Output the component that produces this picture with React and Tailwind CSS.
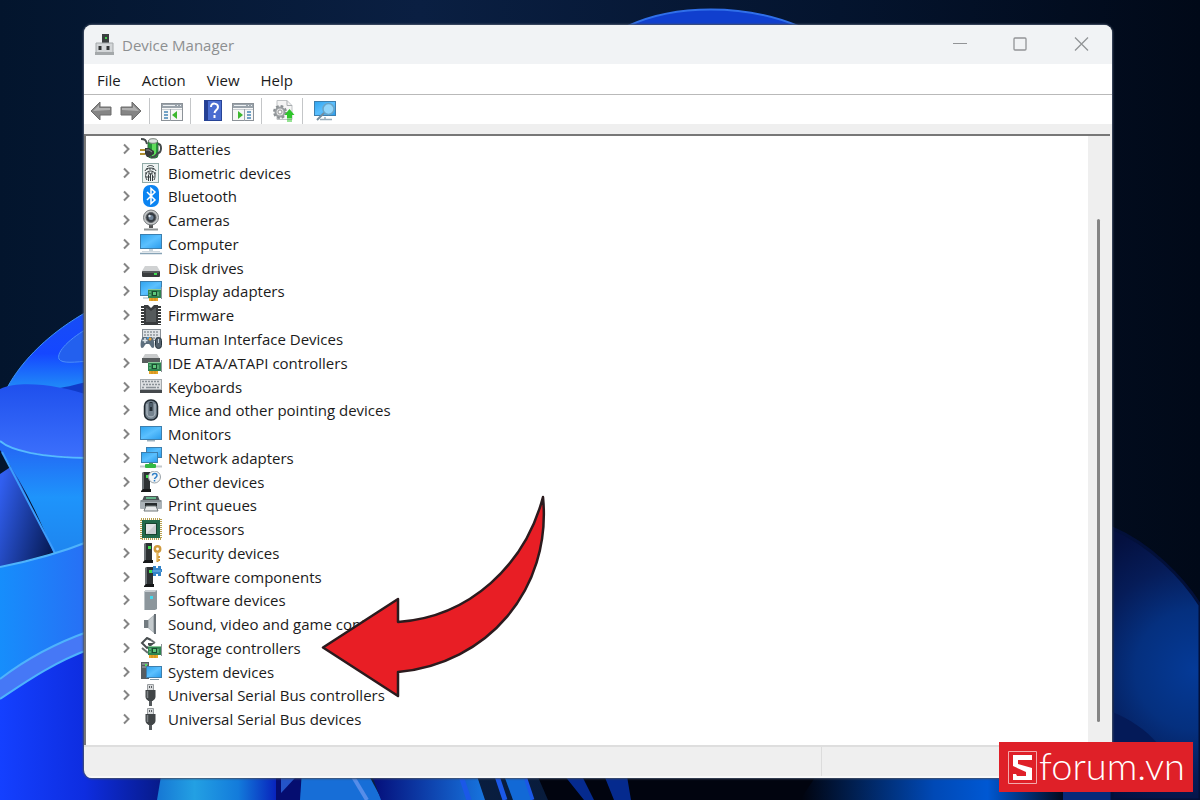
import React from 'react';

const menuItems = ["File", "Action", "View", "Help"];

// shared parts of the device icons, all drawn on a 22x22 grid
const Screen = ({ x, y, w, h }) => (
    <>
        <rect x={x} y={y} width={w} height={h} fill="#3d7fae" />
        <rect x={x + 1} y={y + 1} width={w - 2} height={h - 2} fill="url(#screen)" />
    </>
);

const Card = ({ x, y }) => (
    <>
        <rect x={x + 1} y={y + 8} width="9" height="4" fill="#e8a628" />
        <path d={`M${x + 4} ${y + 8}v4M${x + 7} ${y + 8}v4`} stroke="#c98a1c" />
        <rect x={x} y={y} width="13" height="9" fill="#2f8450" />
        <rect x={x} y={y} width="13" height="1" fill="#8cc79a" />
        <rect x={x + 4} y={y + 2} width="5" height="5" fill="#1b4b30" />
        <rect x={x + 5} y={y + 3} width="3" height="3" fill="#5fc97c" />
        <path d={`M${x + 1} ${y + 3}h2M${x + 1} ${y + 6}h2M${x + 10} ${y + 3}v4`} stroke="#80d094" />
        <path d={`M${x + 13.5} ${y - 2}v12`} stroke="#8c9499" />
    </>
);

const Tower = ({ x }) => (
    <>
        <path d={`M${x} 2l2-1h6v17h-7l-1 1z`} fill="#2d3133" />
        <path d={`M${x} 2l2-1v17l-2 1z`} fill="#6b7175" />
        <rect x={x + 4} y="4" width="3" height="3" fill="#42e04f" />
        <path d={`M${x - 1} 20l2-2h8v3h-10z`} fill="#161819" />
    </>
);

const icons = {
    battery: (
        <>
            <rect x="8" y="2" width="10" height="18" rx="3" fill="#249638" stroke="#346941" />
            <path d="M12 4h4v14h-4z" fill="#5fdc5c" />
            <ellipse cx="13" cy="3" rx="4.500" ry="2.300" fill="#dce3e0" stroke="#788079" />
            <path d="M1 1c4 0 5 1 6 5M18 6c4 0 4 8 0 9-2 2-3 5-7 4" fill="none" stroke="#444a4b" strokeWidth="2" />
            <path d="M0 12h5M0 16h5" stroke="#b09031" strokeWidth="2" />
            <path d="M5 10h4l5 3v3l-5 3H7l-2-3z" fill="#373b3c" />
            <path d="M6 12h3l3 2" stroke="#8c9192" fill="none" />
        </>
    ),
    fingerprint: (
        <>
            <rect x="2.500" y="1.500" width="16" height="19" fill="#edf3f2" stroke="#91aaa7" />
            <g fill="none" stroke="#343a3d">
                <path d="M7 5c2-2 5-2 7 0M5 9c1-4 10-4 11 0M7 18c-1-2-2-4-1-6 1-4 8-4 9 0 0 3 0 4-1 6M8.500 19v-6c1-2 3-2 4 0v6M10.500 12v7" />
                <path d="M6 7h9M5 11h11M6 15h9" strokeDasharray="2 1" />
            </g>
        </>
    ),
    bluetooth: (
        <>
            <rect x="3" y="0" width="16" height="22" rx="7" fill="#0b84f2" />
            <path d="M7 7l8 8-4 3.500V3.500L15 7l-8 8" fill="none" stroke="#fff" strokeWidth="1.500" />
        </>
    ),
    camera: (
        <>
            <path d="M9 15h4v4H9z" fill="#555" />
            <path d="M4 20.500h14" stroke="#919596" strokeWidth="2" />
            <circle cx="11" cy="8.500" r="7.500" fill="#c4c7c8" stroke="#777b7e" />
            <circle cx="11" cy="8.500" r="5" fill="#353b42" stroke="#606468" />
            <circle cx="11" cy="8.500" r="2.500" fill="#6f8296" />
            <circle cx="9.500" cy="7" r="1.200" fill="#dde7ef" />
        </>
    ),
    computer: (
        <>
            <Screen x={0} y={1} w={22} h={15} />
            <path d="M9 16h4v2H9z" fill="#c8d5dd" />
            <path d="M2 18.500h18" stroke="#d0d9df" />
            <path d="M0 20.500h22" stroke="#87a3b6" strokeWidth="1.500" />
        </>
    ),
    disk: (
        <>
            <path d="M5 9h12l3 5H2z" fill="#d0d2d3" />
            <rect x="2" y="14" width="18" height="6" rx="1" fill="#3a3d3e" />
            <path d="M3 15h16" stroke="#797d7f" />
            <rect x="14" y="16" width="3" height="2" fill="#42e052" />
        </>
    ),
    display: (
        <>
            <Screen x={0} y={1} w={22} h={15} />
            <path d="M3 18h6" stroke="#9bb2c0" />
            <Card x={8} y={9} />
        </>
    ),
    firmware: (
        <>
            <path d="M2.500 2v19M19.500 2v19" stroke="#373a3b" strokeWidth="3" strokeDasharray="2 1" />
            <path d="M4 1h4l3 3 3-3h4v20H4z" fill="#393c3e" />
            <path d="M6 4h1l4 3 4-3h1v14H6z" fill="#555a5c" />
        </>
    ),
    hid: (
        <>
            <rect x="2.500" y="1.500" width="18" height="11" fill="#e0e4e7" stroke="#878f96" />
            <path d="M4 4h15M4 7h15M4 10h15" stroke="#8d959c" strokeWidth="1.500" strokeDasharray="2 1" />
            <path d="M3 9h9c3 4 3 11 1 11s-3-4-4-4H6c-1 0-2 4-4 4s-2-8 1-11z" fill="#5d6f7e" />
            <path d="M5 10v5M2.500 12.500h5" stroke="#dfe7ec" strokeWidth="1.500" />
            <circle cx="10" cy="11" r="1.500" fill="#eea233" />
            <circle cx="8" cy="10" r="1" fill="#4ca8ee" />
            <rect x="15.500" y="9.500" width="6" height="11" rx="3" fill="#53616d" stroke="#26333b" />
            <path d="M18.500 11v4" stroke="#c5d0d7" />
        </>
    ),
    ide: (
        <>
            <path d="M5 2h12l3 5H2z" fill="#c9cbcc" />
            <rect x="2" y="6" width="18" height="5" fill="#595d5e" />
            <Card x={8} y={10} />
        </>
    ),
    keyboard: (
        <>
            <rect x="0" y="3" width="22" height="13" fill="#a5aaae" />
            <rect x="1" y="4" width="20" height="9" fill="#dde0e2" />
            <path d="M2 5.500h18M3 8.500h17M2 11.500h3M17 11.500h3" stroke="#8a9197" strokeWidth="1.500" strokeDasharray="2 1" />
            <path d="M6 11.500h10" stroke="#8a9197" strokeWidth="1.500" />
            <rect x="0" y="14" width="22" height="3" fill="#45494c" />
        </>
    ),
    mouse: (
        <>
            <rect x="4.500" y="1" width="13" height="20" rx="6" fill="#75838f" stroke="#222b33" strokeWidth="1.500" />
            <path d="M7 5v10c1 4 7 4 8 0V5" fill="none" stroke="#b9c3cb" />
            <path d="M11 3v9" stroke="#242d35" strokeWidth="3" />
            <path d="M11 4v4" stroke="#7890a3" />
        </>
    ),
    monitor: (
        <>
            <Screen x={0} y={3} w={22} h={14} />
            <path d="M7 17h8v1.500H7z" fill="#9eb2c0" />
        </>
    ),
    network: (
        <>
            <Screen x={6} y={0} w={16} h={11} />
            <Screen x={1} y={5} w={17} h={11} />
            <path d="M9 16h4v3H9z" fill="#46aa4f" />
            <path d="M0 19.500h22" stroke="#c3c9cc" strokeWidth="2" />
            <rect x="5" y="17" width="11" height="4" rx="1" fill="#33b843" />
        </>
    ),
    other: (
        <>
            <Tower x={2} />
            <circle cx="14.500" cy="6" r="6" fill="#f4f6f7" stroke="#9aa3a8" />
            <path d="M12.500 4.500c0-3 4.500-2.500 4.500 0 0 2-2 1.500-2.500 3.500M14.500 9v1.500" fill="none" stroke="#2e7fc8" strokeWidth="1.500" />
        </>
    ),
    printer: (
        <>
            <path d="M4 2h14l2 5H2z" fill="#4d5457" />
            <path d="M6 3h10v2H6z" fill="#65b68b" />
            <rect x="0" y="6" width="22" height="9" rx="1" fill="#aab2b7" />
            <path d="M1 7h20" stroke="#646c70" />
            <path d="M5 9h12v6H5z" fill="#252a2c" />
            <path d="M6 12h10l2 5H4z" fill="#e5e8e9" stroke="#71787b" />
        </>
    ),
    cpu: (
        <>
            <rect x="1" y="1" width="20" height="20" fill="none" stroke="#b7a14f" strokeWidth="2" strokeDasharray="1 1" />
            <rect x="2" y="2" width="18" height="18" fill="#23694a" />
            <rect x="5.500" y="5.500" width="11" height="11" fill="#e2e4e5" stroke="#17442f" />
            <path d="M6 16L16 6v10z" fill="#cbcfd1" />
        </>
    ),
    security: (
        <>
            <Tower x={4} />
            <g fill="none" stroke="#d09a3c">
                <circle cx="17.500" cy="7" r="2.700" strokeWidth="2.500" />
                <path d="M17.500 9v11M18 15h2M18 18h2" strokeWidth="2" />
            </g>
            <path d="M17 10v9" stroke="#f3ca73" />
        </>
    ),
    component: (
        <>
            <Tower x={5} />
            <path d="M13 0h3v2h2V0h3v3h1v3h-1v4h-3V8h-2v2h-3V7h-1V4h1z" fill="#3484c9" />
            <path d="M13 5h8" stroke="#79b8ea" />
        </>
    ),
    software: (
        <>
            <path d="M4 3l2-2h11v19l-2 1H4z" fill="#8c969c" />
            <path d="M4 3l2-2h11l-2 2z" fill="#c6ccd0" />
            <path d="M4.500 3v18" stroke="#bbc3c7" />
            <rect x="10" y="7" width="3" height="3" fill="#43d8eb" />
        </>
    ),
    sound: (
        <>
            <path d="M4 7h4v8H4z" fill="#737b80" />
            <path d="M8 7l7-6v20l-7-6z" fill="#a5acb0" />
            <path d="M9 7l4-4v16l-4-4z" fill="#c4cacd" />
            <path d="M14 1h2v20h-2z" fill="#697177" />
        </>
    ),
    storage: (
        <>
            <path d="M11 3L7 1 2 6l5 5 5-4H8" fill="none" stroke="#484d4f" strokeWidth="2" />
            <path d="M2 11l6 5M11 3l4 3" stroke="#686d6f" strokeWidth="2" />
            <Card x={8} y={9} />
        </>
    ),
    system: (
        <>
            <path d="M1 1h8v17H1z" fill="#565d61" />
            <path d="M2 3h6M2 6h6" stroke="#a9b0b3" />
            <rect x="5" y="3" width="2" height="2" fill="#52df5a" />
            <Screen x={6} y={5} w={16} h={12} />
            <path d="M10 18.500h9" stroke="#7f97a6" />
        </>
    ),
    usb: (
        <>
            <path d="M7.500.5h6v6h-6z" fill="#d8dadb" stroke="#9a9ea1" />
            <path d="M9.500 2v2M11.500 2v2" stroke="#585c5f" />
            <path d="M5.500 6h10v7c0 2-2 3-3 4h-4c-1-1-3-2-3-4z" fill="#414547" />
            <path d="M7.500 7v7" stroke="#7d8285" strokeWidth="1.500" />
            <path d="M9 17h3v5H9z" fill="#55595c" />
        </>
    ),
};

const devices = [
    ["Batteries", "battery"],
    ["Biometric devices", "fingerprint"],
    ["Bluetooth", "bluetooth"],
    ["Cameras", "camera"],
    ["Computer", "computer"],
    ["Disk drives", "disk"],
    ["Display adapters", "display"],
    ["Firmware", "firmware"],
    ["Human Interface Devices", "hid"],
    ["IDE ATA/ATAPI controllers", "ide"],
    ["Keyboards", "keyboard"],
    ["Mice and other pointing devices", "mouse"],
    ["Monitors", "monitor"],
    ["Network adapters", "network"],
    ["Other devices", "other"],
    ["Print queues", "printer"],
    ["Processors", "cpu"],
    ["Security devices", "security"],
    ["Software components", "component"],
    ["Software devices", "software"],
    ["Sound, video and game controllers", "sound"],
    ["Storage controllers", "storage"],
    ["System devices", "system"],
    ["Universal Serial Bus controllers", "usb"],
    ["Universal Serial Bus devices", "usb"],
];

function Wallpaper() {
    return (
        <svg className="absolute inset-0 h-full w-full" viewBox="0 0 1200 800" preserveAspectRatio="none" aria-hidden="true">
            <defs>
                <linearGradient id="night">
                    <stop offset="0" stopColor="#03152d" />
                    <stop offset=".35" stopColor="#0a1f42" />
                    <stop offset=".7" stopColor="#04142e" />
                    <stop offset="1" stopColor="#010918" />
                </linearGradient>
                <linearGradient id="screen" x2="1" y2="1">
                    <stop offset="0" stopColor="#31a5ef" />
                    <stop offset=".5" stopColor="#5bc0ff" />
                    <stop offset="1" stopColor="#2d9eed" />
                </linearGradient>
                <linearGradient id="petalTop" x2="0" y2="1">
                    <stop offset="0" stopColor="#174df5" />
                    <stop offset=".5" stopColor="#1547ff" />
                    <stop offset="1" stopColor="#239cf6" />
                </linearGradient>
                <linearGradient id="petalMid" x2="0" y2="1">
                    <stop offset="0" stopColor="#1f50ed" />
                    <stop offset="1" stopColor="#3c70fc" />
                </linearGradient>
                <linearGradient id="petalInner" x2="0" y2="1">
                    <stop offset="0" stopColor="#2463f4" />
                    <stop offset=".5" stopColor="#1e94fb" />
                    <stop offset="1" stopColor="#1e85ef" />
                </linearGradient>
                <linearGradient id="fold" y1=".2" x2="1" y2=".7">
                    <stop offset="0" stopColor="#315ff0" />
                    <stop offset="1" stopColor="#071c58" />
                </linearGradient>
                <linearGradient id="petalLow">
                    <stop offset="0" stopColor="#168efc" />
                    <stop offset="1" stopColor="#286ef5" />
                </linearGradient>
                <linearGradient id="base">
                    <stop offset="0" stopColor="#1440ff" />
                    <stop offset=".5" stopColor="#0e2de0" />
                    <stop offset="1" stopColor="#06187f" />
                </linearGradient>
                <radialGradient id="right" gradientUnits="userSpaceOnUse" cx="1195" cy="670" r="150">
                    <stop offset="0" stopColor="#053a97" />
                    <stop offset=".4" stopColor="#05307f" />
                    <stop offset=".7" stopColor="#061c58" />
                    <stop offset="1" stopColor="#04103f" />
                </radialGradient>
                <linearGradient id="stemA">
                    <stop offset="0" stopColor="#1677d4" />
                    <stop offset=".3" stopColor="#23a0e3" />
                    <stop offset=".65" stopColor="#137bdb" />
                    <stop offset="1" stopColor="#0616b8" />
                </linearGradient>
                <linearGradient id="stemB">
                    <stop offset="0" stopColor="#040c78" />
                    <stop offset="1" stopColor="#1775df" />
                </linearGradient>
                <linearGradient id="stemC">
                    <stop offset="0" stopColor="#01030d" />
                    <stop offset=".5" stopColor="#0049b6" />
                    <stop offset=".7" stopColor="#0058d3" />
                    <stop offset="1" stopColor="#010411" />
                </linearGradient>
            </defs>
            <rect width="1200" height="800" fill="url(#night)" />

            <path d="M628 26C675 4 745 4 798 26z" fill="#103fce" stroke="#306fe9" strokeWidth="2" />

            <path d="M90 310C50 332 22 360 7 388L90 397z" fill="url(#petalTop)" stroke="#3c93f7" />
            <path d="M90 327C70 338 56 352 59 359c3 5 16 3 31 2" fill="#2360ee" stroke="#4b8efa" />
            <path d="M50 389c14-1 24-4 40-8v20z" fill="#103bc9" />
            <path d="M0 389c20-9 60-4 90 7v62C40 457 10 450 0 441z" fill="url(#petalMid)" />
            <path d="M0 474l12-8 42 86-54 16z" fill="url(#fold)" />
            <path d="M0 441c10 9 40 17 90 17v90l-36 6C40 518 22 482 0 450z" fill="url(#petalInner)" />
            <path d="M0 441c10 9 40 17 90 17" fill="none" stroke="#56baff" strokeWidth="2" />
            <path d="M2 452l53 101" stroke="#3c9dfc" strokeWidth="2" />

            <path d="M0 650h170v150H0z" fill="url(#base)" />
            <path d="M0 567c30-6 60-14 90-26v90c-40 14-68 31-90 48z" fill="url(#petalLow)" />
            <path d="M0 679c22-17 50-34 90-48v18c-38 14-66 34-90 50z" fill="#4678f6" />
            <path d="M0 567c30-6 60-14 90-26M0 679c22-17 50-34 90-48M0 699c24-16 52-36 90-50" fill="none" stroke="#4eb3fc" strokeWidth="2" />

            <path d="M162 770h120v30H157z" fill="url(#stemA)" />
            <path d="M276 770h25v30h-25z" fill="#050d70" />
            <path d="M295 778h-14v15z" fill="#2454c9" />
            <path d="M302 770h64l16 30h-82z" fill="#176ed7" />
            <path d="M349 770l18 30" stroke="#568de9" strokeWidth="4" />
            <path d="M370 770h105l10 30H381z" fill="url(#stemB)" />
            <path d="M459 770l10 30M495 770l10 30M522 770l10 30" stroke="#1b58e8" strokeWidth="5" />
            <path d="M502 770h19l10 30h-18z" fill="#1269d6" />
            <path d="M535 770h285v30H548z" fill="#01040f" />
            <path d="M560 770h19l15 30h-10zM602 770h24l5 30h-17z" fill="#052a8e" />
            <path d="M820 770h248v30H800z" fill="url(#stemC)" />
            <path d="M1063 770h112v30h-112z" fill="#082979" />

            <path d="M1112 528c38 16 71 50 88 77v195h-88z" fill="url(#right)" stroke="#031039" strokeWidth="3" />
            <path d="M1112 712c18 7 34 18 46 32h-46z" fill="#041a58" />
        </svg>
    );
}

function TitleBar() {
    return (
        <header className="flex h-[39px] shrink-0 items-center bg-[#f1f3f5] pl-[10px]">
            <svg className="h-[22px] w-[22px]" viewBox="0 0 22 22" aria-hidden="true">
                <rect x="8" y="0" width="7" height="12" fill="#3b3f40" />
                <rect x="11" y="3" width="2" height="2" fill="#48d14f" />
                <path d="M2 9h17v10H2z" fill="#d3d6d8" stroke="#a4a8aa" />
                <path d="M1 18h19v3H1z" fill="#a4a8aa" />
                <path d="M6 12v4M14 12v4" stroke="#303334" strokeWidth="3" />
            </svg>
            <h1 className="ml-[6px] flex-1 text-[15px] text-[#8d8f91]">Device Manager</h1>
            <button className="flex h-full w-[60px] items-center justify-center" aria-label="Minimize">
                <svg className="h-4 w-4" viewBox="0 0 16 16"><path d="M1 6.500h14" stroke="#929496" /></svg>
            </button>
            <button className="flex h-full w-[60px] items-center justify-center" aria-label="Maximize">
                <svg className="h-4 w-4" viewBox="0 0 16 16"><rect x="2" y="1" width="12" height="12" rx="1" fill="none" stroke="#929496" strokeWidth="1.300" /></svg>
            </button>
            <button className="flex h-full w-[62px] items-center justify-center" aria-label="Close">
                <svg className="h-4 w-4" viewBox="0 0 16 16"><path d="M2 .5l13 13M15 .5l-13 13" stroke="#929496" strokeWidth="1.300" /></svg>
            </button>
        </header>
    );
}

function ToolButton({ label, children }) {
    return (
        <button className="flex w-[30px] items-center justify-center pt-[2px]" aria-label={label}>
            <svg className="h-[22px] w-[22px]" viewBox="0 0 22 22">{children}</svg>
        </button>
    );
}

const Separator = () => <span className="ml-[3px] mr-[7px] mt-[3px] w-px bg-[#c4c6c8]" />;

const Pane = () => (
    <>
        <rect x=".5" y="3.500" width="21" height="17" fill="#f7f7f7" stroke="#8c9298" />
        <rect x="1" y="4" width="20" height="4" fill="#9aa3ab" />
        <path d="M2 5.500h12M16 5.500h1M19 5.500h1" stroke="#eef1f3" />
        <path d="M1 9.500h20" stroke="#c8cdd1" />
    </>
);

function Toolbar() {
    return (
        <div className="flex h-[29px] shrink-0 bg-white pl-[2px]" role="toolbar" aria-label="Tools">
            <ToolButton label="Back">
                <path d="M1 11l9-9v5h11v8H10v5z" fill="#858585" stroke="#6c6c6c" />
                <path d="M3 11l6-6v3h11v2z" fill="#b0b0b0" />
            </ToolButton>
            <ToolButton label="Forward">
                <path d="M21 11l-9-9v5H1v8h11v5z" fill="#858585" stroke="#6c6c6c" />
                <path d="M19 11l-6-6v3H2v2z" fill="#b0b0b0" />
            </ToolButton>
            <Separator />
            <ToolButton label="Show console tree">
                <Pane />
                <path d="M3 12h4M3 15h4M3 18h4" stroke="#4585b5" strokeWidth="1.500" />
                <path d="M9.500 9v12" stroke="#9ba3aa" />
                <path d="M16 11v8l-5-4z" fill="#3db82f" />
            </ToolButton>
            <Separator />
            <ToolButton label="Help">
                <rect x="2.500" y=".5" width="17" height="20" fill="#4a6dd0" stroke="#274396" />
                <path d="M3 1h3v19H3z" fill="#243f94" />
                <path d="M9 7c0-5 7-4 7 0 0 3-3 3-3.500 6M12.500 15v3" fill="none" stroke="#fff" strokeWidth="2" />
            </ToolButton>
            <ToolButton label="Show action pane">
                <Pane />
                <path d="M15 12h4M15 15h4M15 18h4" stroke="#4585b5" strokeWidth="1.500" />
                <path d="M12.500 9v12" stroke="#9ba3aa" />
                <path d="M6 11v8l5-4z" fill="#3db82f" />
            </ToolButton>
            <Separator />
            <ToolButton label="Update driver">
                <path d="M4 .5h10l5 5v14H4z" fill="#f4f4f4" stroke="#c0c3c5" />
                <path d="M14 .5v5h5" fill="none" stroke="#a8acaf" />
                <circle cx="7" cy="12" r="4.500" fill="#e3e3e3" stroke="#9a9ea1" strokeWidth="2" />
                <circle cx="7" cy="12" r="6" fill="none" stroke="#8b9093" strokeWidth="2" strokeDasharray="2.700 2" />
                <circle cx="7" cy="12" r="2" fill="#fff" stroke="#999" />
                <path d="M16.500 9l5 6H19v3h-5v-3h-2.500zM14 18.500h5v1h-5zM14 20.500h5v1h-5z" fill="#2fc52b" />
            </ToolButton>
            <Separator />
            <ToolButton label="Scan for hardware changes">
                <Screen x={0} y={1} w={22} h={15} />
                <path d="M11 17v2M6 19.500h12" stroke="#98acb9" strokeWidth="1.500" />
                <circle cx="14.500" cy="9" r="5.500" fill="#91d5fa" stroke="#69a5c8" strokeWidth="1.500" />
                <path d="M10 13l-7 7" stroke="#758c9c" strokeWidth="2" />
            </ToolButton>
        </div>
    );
}

function DeviceRow({ name, icon }) {
    return (
        <li className="flex flex-1">
            <button className="flex items-center text-left">
                <svg className="h-3 w-3" viewBox="0 0 12 12" aria-hidden="true">
                    <path d="M4 1.500L8.500 6 4 10.500" fill="none" stroke="#858585" strokeWidth="2" />
                </svg>
                <svg className="ml-2 h-[22px] w-[22px]" viewBox="0 0 22 22" aria-hidden="true">{icons[icon]}</svg>
                <span className="ml-[6px] whitespace-nowrap">{name}</span>
            </button>
        </li>
    );
}

function SforumBadge() {
    return (
        <a href="#sforum" className="absolute bottom-2 right-[7px] flex h-[50px] w-[194px] items-center bg-[#df2028] pl-[9px] text-white">
            <svg className="h-[33px] w-[29px] shrink-0" viewBox="0 0 29 33" aria-hidden="true">
                <path d="M.5.5h28v32H.5z" fill="none" stroke="#f3a9ac" />
                <path d="M5 4h19v5H10v4l14 4v12H5v-6h3l1 2h9v-4L5 15z" fill="#fff" />
            </svg>
            <span className="ml-[2px] pb-1 font-['Lato',sans-serif] text-[38px] font-light leading-none">forum.vn</span>
        </a>
    );
}

function App() {
    return (
        <main className="relative flex min-h-screen overflow-hidden bg-[#03142c] pb-[22px] pl-[84px] pr-[88px] pt-[25px] font-['Open_Sans','Noto_Sans',sans-serif] text-[15px] leading-5 text-[#1b1b1b]">
            <Wallpaper />
            <section className="relative flex flex-1 flex-col overflow-hidden rounded-[8px] bg-[#efefef] shadow-[0_0_2px_1px_#465267]">
                <TitleBar />
                <nav className="flex h-[31px] shrink-0 items-center gap-[21px] border-b border-[#b9b9b9] bg-white pl-[13px] pt-px">
                    {menuItems.map((item) => <button key={item}>{item}</button>)}
                </nav>
                <Toolbar />
                <div className="mr-[2px] mt-[10px] flex flex-1 border-l-2 border-t-2 border-[#777] bg-white">
                    <ul className="flex flex-1 flex-col pb-[14px] pl-[34px] pt-px">
                        {devices.map(([name, icon]) => <DeviceRow key={name} name={name} icon={icon} />)}
                    </ul>
                    <div className="flex w-[22px] bg-[#efefef] pb-[23px] pl-[9px] pt-[83px]">
                        <div className="w-[3px] rounded-full bg-[#858585]" />
                    </div>
                </div>
                <footer className="flex h-[33px] shrink-0 border-y-2 border-t-[#dedede] border-b-[#f8f8f8]">
                    <div className="flex-1 border-r border-[#dcdcdc]" />
                    <div className="w-[290px]" />
                </footer>
            </section>
            <svg className="pointer-events-none absolute left-[320px] top-[494px] h-[206px] w-[228px]" viewBox="320 494 228 206" aria-hidden="true">
                <path d="M543 497C525 565 470 617 398 622V599L323 647.500 398 696V672C487 664 552 590 543 497z" fill="#e81e25" stroke="#2b1b1e" strokeWidth="2.500" strokeLinejoin="round" />
            </svg>
            <SforumBadge />
        </main>
    );
}

export default App;
